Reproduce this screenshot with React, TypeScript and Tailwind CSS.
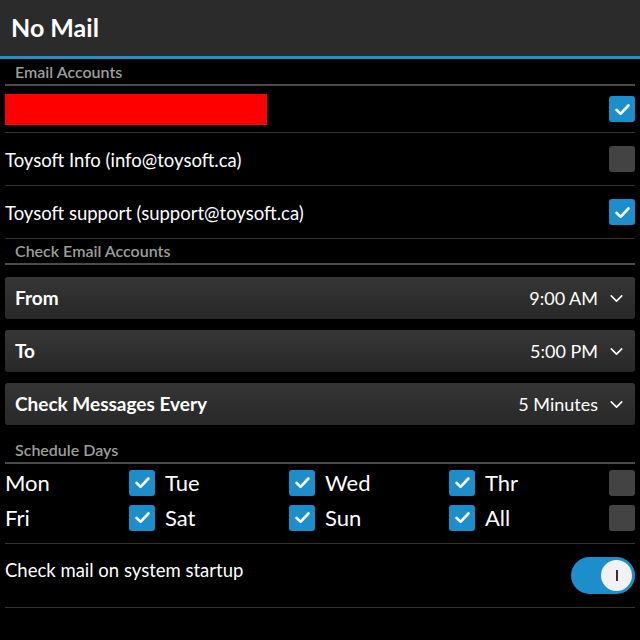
import { ChevronDown } from 'lucide-react';

const kutuTik = (
  <svg className="w-[19px] h-[19px]" viewBox="0 0 24 24" fill="none" stroke="white" strokeWidth={3.4} strokeLinecap="round" strokeLinejoin="round">
    <path d="M4.5 12.5l5 5L19.5 7" />
  </svg>
);

function Kutu({ secili }: { secili: boolean }) {
  return secili ? (
    <div className="w-[26px] h-[26px] rounded-[3px] bg-[#1b8ecb] flex items-center justify-center shrink-0">{kutuTik}</div>
  ) : (
    <div className="w-[26px] h-[26px] rounded-[3px] bg-[#434343] shrink-0" />
  );
}

function Baslik({ metin }: { metin: string }) {
  return (
    <div className="h-[26px] mx-[5px] border-b-2 border-[#4a4a4a] flex items-center px-[10px] text-[16px] font-semibold text-[#9d9d9d]">
      {metin}
    </div>
  );
}

function Secim({ etiket, deger }: { etiket: string; deger: string }) {
  return (
    <div className="h-[42px] mx-[5px] rounded-[3px] bg-gradient-to-b from-[#363636] to-[#282828] flex items-center pl-[10px] pr-[8px] text-white">
      <span className="flex-1 font-bold text-[19px]">{etiket}</span>
      <span className="mr-[8px] text-[18px]">{deger}</span>
      <ChevronDown className="w-[21px] h-[21px]" strokeWidth={1.8} />
    </div>
  );
}

const hesaplar = [
  { ad: null, secili: true, yukseklik: 'h-[47px]' },
  { ad: 'Toysoft Info (info@toysoft.ca)', secili: false, yukseklik: 'h-[53px]' },
  { ad: 'Toysoft support (support@toysoft.ca)', secili: true, yukseklik: 'h-[53px]' },
];

const gunler = [
  ['Mon', true], ['Tue', true], ['Wed', true], ['Thr', false],
  ['Fri', true], ['Sat', true], ['Sun', true], ['All', false],
] as const;

export default function App() {
  return (
    <div className="w-[640px] h-[640px] bg-black text-white overflow-hidden" style={{ fontFamily: 'Lato, "Open Sans", sans-serif' }}>
      {/* Header */}
      <div className="h-[56px] bg-[#2b2b2b] flex items-center px-[11px] text-[25px] font-bold">No Mail</div>
      <div className="h-[3px] bg-[#1f8fc4]" />

      <div className="pt-[1px]">
        <Baslik metin="Email Accounts" />
        {hesaplar.map((h, i) => (
          <div key={i} className={`${h.yukseklik} mx-[5px] border-b border-[#333] flex items-center`}>
            {h.ad ? (
              <span className="flex-1 text-[18.5px] pt-[3px]">{h.ad}</span>
            ) : (
              <div className="flex-1">
                <div className="w-[262px] h-[31px] bg-[#ff0000]" />
              </div>
            )}
            <Kutu secili={h.secili} />
          </div>
        ))}

        <Baslik metin="Check Email Accounts" />
        <div className="flex flex-col gap-[11px] pt-[12px]">
          <Secim etiket="From" deger="9:00 AM" />
          <Secim etiket="To" deger="5:00 PM" />
          <Secim etiket="Check Messages Every" deger="5 Minutes" />
        </div>

        <div className="pt-[13px]">
          <Baslik metin="Schedule Days" />
        </div>
        <div className="mx-[5px] grid grid-cols-4 gap-x-[10px] gap-y-[8px] pt-[5px] pb-[12px] border-b border-[#333]">
          {gunler.map(([g, s]) => (
            <div key={g} className="flex items-center justify-between h-[27px]">
              <span className="text-[22px]">{g}</span>
              <Kutu secili={s} />
            </div>
          ))}
        </div>

        <div className="h-[64px] mx-[5px] border-b border-[#333] flex items-center">
          <span className="flex-1 text-[18.5px] -mt-[10px]">Check mail on system startup</span>
          <div className="w-[64px] h-[37px] rounded-full bg-[#1b8ecb] flex items-center justify-end pr-[3px]">
            <div className="w-[31px] h-[31px] rounded-full bg-[#f2f2f2] flex items-center justify-center">
              <div className="w-[2px] h-[11px] bg-[#333]" />
            </div>
          </div>
        </div>
      </div>
    </div>
  );
}
